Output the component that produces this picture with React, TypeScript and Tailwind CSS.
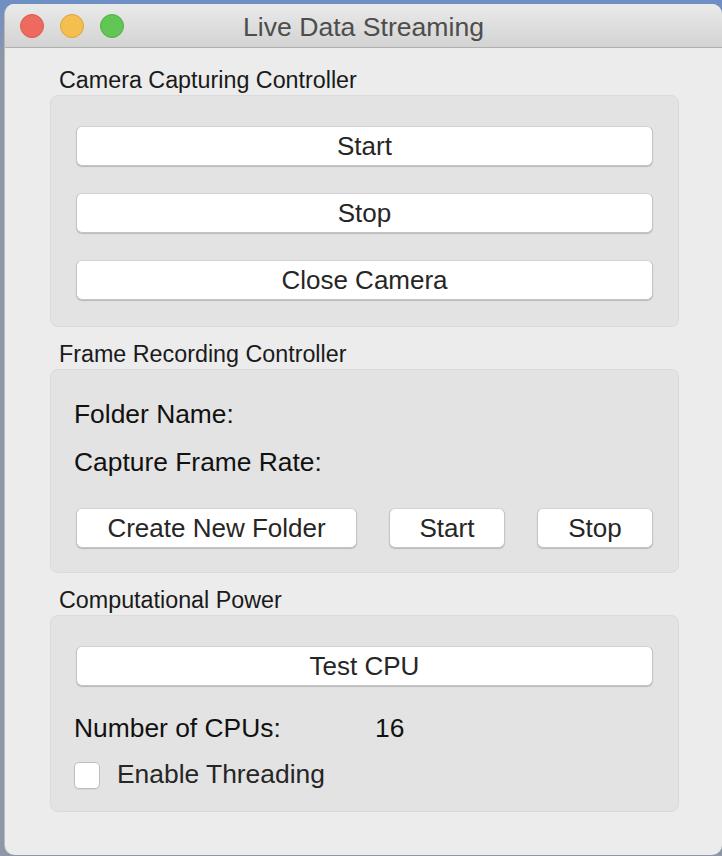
import React from "react";

const font = { fontFamily: '"Liberation Sans", Arial, sans-serif' };

function MacButton({ label, className = "" }: { label: string; className?: string }) {
  return (
    <button
      className={`h-[40px] rounded-[6px] border border-[#c4c4c4] border-t-[#d2d2d2] bg-white text-[26px] leading-none text-[#262626] shadow-[0_1px_1px_rgba(0,0,0,0.18)] ${className}`}
    >
      {label}
    </button>
  );
}

function GroupBox({ title, children, className = "" }: { title: string; children: React.ReactNode; className?: string }) {
  return (
    <div>
      <div className="pl-[9px] h-[30px] flex items-center text-[23.3px] text-[#1a1a1a]">{title}</div>
      <div className={`rounded-[8px] border border-[#dadada] bg-[#e3e3e3] px-[25px] ${className}`}>{children}</div>
    </div>
  );
}

export default function App() {
  return (
    <div
      className="w-[722px] h-[856px] bg-[linear-gradient(to_bottom,#6d8fc6_0px,#8e97a6_60px)] pt-[4px] pl-[4px] overflow-hidden"
      style={font}
    >
      <div className="w-[718px] h-[851px] rounded-[10px] bg-[#ececec] overflow-hidden border-l border-[#b9b9b9] flex flex-col">
        {/* title bar */}
        <div className="relative h-[44px] shrink-0 bg-gradient-to-b from-[#eaeaea] to-[#d3d3d3] border-b border-[#b0b0b0] flex items-center justify-center">
          <div className="absolute left-[15px] top-[10px] flex gap-[16px]">
            <span className="w-[24px] h-[24px] rounded-full bg-[#ee6a5f] border border-[#d65a4f]" />
            <span className="w-[24px] h-[24px] rounded-full bg-[#f5bf4f] border border-[#d8a33f]" />
            <span className="w-[24px] h-[24px] rounded-full bg-[#62c655] border border-[#4fae44]" />
          </div>
          <span className="text-[26.6px] text-[#4d4d4d] pt-[4px]">Live Data Streaming</span>
        </div>

        {/* content */}
        <div className="pl-[45px] pr-[43px] pt-[17px] flex flex-col gap-[12px]">
          <GroupBox title="Camera Capturing Controller" className="pt-[30px] pb-[26px] flex flex-col gap-[27px]">
            <MacButton label="Start" className="w-full" />
            <MacButton label="Stop" className="w-full" />
            <MacButton label="Close Camera" className="w-full" />
          </GroupBox>

          <GroupBox title="Frame Recording Controller" className="pt-[30px] pb-[24px]">
            <div className="-ml-[2px] h-[30px] flex items-center text-[26.4px] text-[#111]">Folder Name:</div>
            <div className="-ml-[2px] mt-[18px] h-[30px] flex items-center text-[26.4px] text-[#111]">Capture Frame Rate:</div>
            <div className="mt-[30px] flex gap-[32px]">
              <MacButton label="Create New Folder" className="flex-1" />
              <MacButton label="Start" className="w-[116px]" />
              <MacButton label="Stop" className="w-[116px]" />
            </div>
          </GroupBox>

          <GroupBox title="Computational Power" className="pt-[30px] pb-[22px]">
            <MacButton label="Test CPU" className="w-full" />
            <div className="-ml-[2px] mt-[28px] h-[30px] flex items-center text-[26.4px] text-[#111]">
              <span className="w-[301px]">Number of CPUs:</span>
              <span>16</span>
            </div>
            <div className="-ml-[2px] mt-[17px] h-[28px] flex items-center gap-[17px] text-[26.4px] text-[#262626]">
              <span className="w-[26px] h-[27px] rounded-[5px] border border-[#bdbdbd] bg-white shadow-[0_1px_0_rgba(0,0,0,0.06)]" />
              <span>Enable Threading</span>
            </div>
          </GroupBox>
        </div>
      </div>
    </div>
  );
}
